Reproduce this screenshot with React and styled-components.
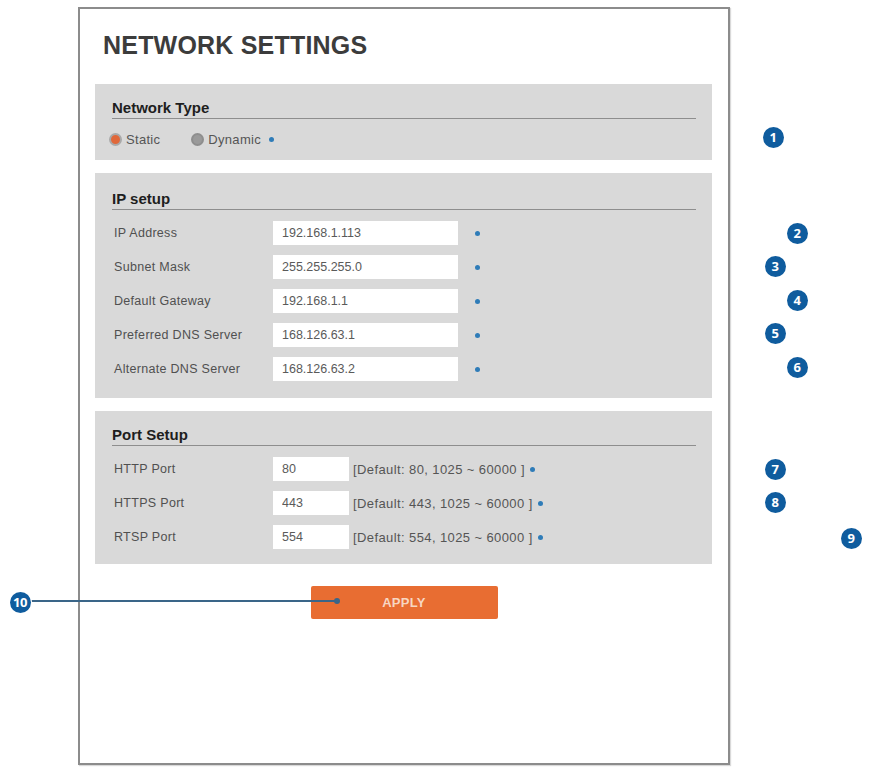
import React from 'react';
import styled, { createGlobalStyle } from 'styled-components';

const GlobalStyle = createGlobalStyle`
  html, body {
    margin: 0;
    padding: 0;
    background: #ffffff;
  }
  body {
    font-family: Arial, "Liberation Sans", sans-serif;
  }
`;

const ipRows = [
  { label: 'IP Address', value: '192.168.1.113' },
  { label: 'Subnet Mask', value: '255.255.255.0' },
  { label: 'Default Gateway', value: '192.168.1.1' },
  { label: 'Preferred DNS Server', value: '168.126.63.1' },
  { label: 'Alternate DNS Server', value: '168.126.63.2' },
];

const portRows = [
  { label: 'HTTP Port', value: '80', hint: '[Default: 80, 1025 ~ 60000 ]' },
  { label: 'HTTPS Port', value: '443', hint: '[Default: 443, 1025 ~ 60000 ]' },
  { label: 'RTSP Port', value: '554', hint: '[Default: 554, 1025 ~ 60000 ]' },
];

const badges = [
  { n: 1, x: 773, y: 137 },
  { n: 2, x: 797, y: 233 },
  { n: 3, x: 775, y: 266 },
  { n: 4, x: 797, y: 300 },
  { n: 5, x: 775, y: 333 },
  { n: 6, x: 797, y: 367 },
  { n: 7, x: 775, y: 469 },
  { n: 8, x: 775, y: 502 },
  { n: 9, x: 851, y: 538 },
  { n: 10, x: 20, y: 602 },
];

export default function App() {
  return (
    <Page>
      <GlobalStyle />
      <Frame>
        <Title>NETWORK SETTINGS</Title>

        <Section top={15} bottom={14}>
          <Heading>Network Type</Heading>
          <RadioRow>
            <Radio checked />
            <RadioLabel>Static</RadioLabel>
            <Radio />
            <RadioLabel>Dynamic</RadioLabel>
            <Dot />
          </RadioRow>
        </Section>

        <Section top={17} bottom={17}>
          <Heading>IP setup</Heading>
          <Rows>
            {ipRows.map(r => (
              <Row key={r.label}>
                <Label>{r.label}</Label>
                <Field wide value={r.value} readOnly />
                <Dot gap={17} />
              </Row>
            ))}
          </Rows>
        </Section>

        <Section top={15} bottom={15}>
          <Heading>Port Setup</Heading>
          <Rows>
            {portRows.map(r => (
              <Row key={r.label}>
                <Label>{r.label}</Label>
                <Field value={r.value} readOnly />
                <Hint>{r.hint}</Hint>
                <Dot gap={5} />
              </Row>
            ))}
          </Rows>
        </Section>

        <ApplyBar>
          <ApplyButton>APPLY</ApplyButton>
        </ApplyBar>
      </Frame>

      <Leader />
      <LeaderEnd />
      {badges.map(b => (
        <Badge key={b.n} style={{ left: b.x - 10.5, top: b.y - 10.5 }}>{b.n}</Badge>
      ))}
    </Page>
  );
}

const Page = styled.div`
  position: relative;
  width: 870px;
  height: 773px;
  overflow: hidden;
  padding-top: 7px;
  box-sizing: border-box;
`;

const Frame = styled.div`
  margin-left: 78px;
  width: 652px;
  height: 758px;
  box-sizing: border-box;
  border: 2px solid #8c8c8c;
  box-shadow: 1px 1px 1px rgba(0, 0, 0, 0.15);
  padding: 0 16px 0 15px;
  background: #ffffff;
`;

const Title = styled.h1`
  margin: 21px 0 24px 8px;
  font-size: 25px;
  line-height: 30px;
  font-weight: bold;
  color: #3c3c3c;
  letter-spacing: 0.2px;
`;

const Section = styled.div`
  background: #d9d9d9;
  padding: ${p => p.top}px 16px ${p => p.bottom}px 14px;
  margin-bottom: 13px;
`;

const Heading = styled.div`
  margin-left: 3px;
  font-size: 15px;
  line-height: 18px;
  font-weight: bold;
  color: #1e1e1e;
  border-bottom: 1px solid #8e8e8e;
  padding-bottom: 1px;
`;

const RadioRow = styled.div`
  display: flex;
  align-items: center;
  height: 14px;
  margin-top: 13px;
`;

const Radio = styled.span`
  width: 13px;
  height: 13px;
  border-radius: 50%;
  box-sizing: border-box;
  background: ${p => (p.checked ? '#e0683a' : '#9a9a9a')};
  border: 2px solid ${p => (p.checked ? '#a9a9a9' : '#8e8e8e')};
  margin-left: ${p => (p.checked ? '0' : '31px')};
`;

const RadioLabel = styled.span`
  margin-left: 4px;
  font-size: 13px;
  letter-spacing: 0.3px;
  color: #555555;
`;

const Dot = styled.span`
  width: 5px;
  height: 5px;
  border-radius: 50%;
  background: #2f7cb8;
  margin-left: ${p => (p.gap != null ? p.gap : 8)}px;
  flex-shrink: 0;
`;

const Rows = styled.div`
  display: flex;
  flex-direction: column;
  gap: 10px;
  margin-top: 11px;
`;

const Row = styled.div`
  display: flex;
  align-items: center;
  height: 24px;
`;

const Label = styled.span`
  width: 164px;
  padding-left: 5px;
  box-sizing: border-box;
  font-size: 12.5px;
  letter-spacing: 0.3px;
  color: #505050;
  flex-shrink: 0;
`;

const Field = styled.input`
  width: ${p => (p.wide ? '185px' : '76px')};
  height: 24px;
  box-sizing: border-box;
  border: none;
  outline: none;
  background: #ffffff;
  padding: 0 0 0 9px;
  font-family: Arial, "Liberation Sans", sans-serif;
  font-size: 12.5px;
  color: #5a5a5a;
`;

const Hint = styled.span`
  margin-left: 4px;
  font-size: 13px;
  letter-spacing: 0.4px;
  color: #555555;
  white-space: nowrap;
`;

const ApplyBar = styled.div`
  display: flex;
  justify-content: center;
  margin-top: 22px;
  padding-left: 1px;
`;

const ApplyButton = styled.button`
  width: 187px;
  height: 33px;
  border: none;
  border-radius: 2px;
  background: #e86d32;
  color: #f7d6c2;
  font-family: Arial, "Liberation Sans", sans-serif;
  font-size: 13px;
  font-weight: bold;
  letter-spacing: 0.3px;
  cursor: pointer;
`;

const Leader = styled.div`
  position: absolute;
  left: 28px;
  top: 600px;
  width: 310px;
  height: 2px;
  background: #3a6588;
`;

const LeaderEnd = styled.div`
  position: absolute;
  left: 334px;
  top: 598px;
  width: 6px;
  height: 6px;
  border-radius: 50%;
  background: #3a6588;
`;

const Badge = styled.div`
  position: absolute;
  width: 21px;
  height: 21px;
  border-radius: 50%;
  background: #0f5c9e;
  box-shadow: 0 0 0 1px #ffffff;
  color: #ffffff;
  font-family: "Open Sans", Arial, sans-serif;
  font-weight: bold;
  font-size: 13px;
  line-height: 21px;
  text-align: center;
  letter-spacing: -0.5px;
`;
